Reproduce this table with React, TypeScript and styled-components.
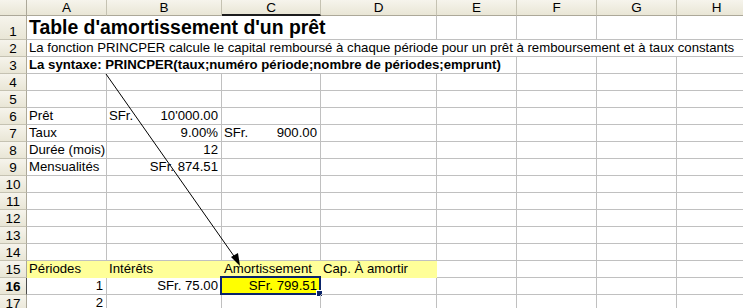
import React from "react";
import styled, { createGlobalStyle, css } from "styled-components";

//////////////////////// TYPES ////////////////////////

interface CellDef {
  text?: string;
  acct?: [string, string];
  align?: "left" | "right";
  bold?: boolean;
  size?: number;
  span?: number;
  fill?: string;
  selected?: boolean;
}

//////////////////////// DATA ////////////////////////

const COLS = ["A", "B", "C", "D", "E", "F", "G", "H"];
const WIDTHS = [80, 115, 99, 116, 80, 80, 80, 80];
const ACTIVE_COL = 2;
const ACTIVE_ROW = 16;
const ROW_COUNT = 17;

const YELLOW = "#ffff99";

const ROWS: Record<number, Record<number, CellDef>> = {
  1: { 0: { text: "Table d'amortissement d'un prêt", bold: true, size: 19.4, span: 4 } },
  2: {
    0: {
      text: "La fonction PRINCPER calcule le capital remboursé à chaque période pour un prêt à remboursement et à taux constants",
      span: 8,
    },
  },
  3: { 0: { text: "La syntaxe: PRINCPER(taux;numéro période;nombre de périodes;emprunt)", bold: true, span: 5 } },
  6: { 0: { text: "Prêt" }, 1: { acct: ["SFr.", "10'000.00"] } },
  7: { 0: { text: "Taux" }, 1: { text: "9.00%", align: "right" }, 2: { acct: ["SFr.", "900.00"] } },
  8: { 0: { text: "Durée (mois)" }, 1: { text: "12", align: "right" } },
  9: { 0: { text: "Mensualités" }, 1: { text: "SFr. 874.51", align: "right" } },
  15: {
    0: { text: "Périodes", fill: YELLOW },
    1: { text: "Intérêts", fill: YELLOW },
    2: { text: "Amortissement", fill: YELLOW },
    3: { text: "Cap. À amortir", fill: YELLOW },
  },
  16: {
    0: { text: "1", align: "right" },
    1: { text: "SFr. 75.00", align: "right" },
    2: { text: "SFr. 799.51", align: "right", fill: "#ffff00", selected: true },
  },
  17: { 0: { text: "2", align: "right" } },
};

//////////////////////// STYLED-COMPONENTS ////////////////////////

const GlobalStyle = createGlobalStyle`
  html, body {
    margin: 0;
    padding: 0;
    background: #ffffff;
    overflow: hidden;
  }
  body {
    font-family: "Liberation Sans", Arial, sans-serif;
    font-size: 13px;
    color: #000000;
  }
`;

const Wrap = styled.div`
  position: relative;
  width: 743px;
  height: 308px;
  overflow: hidden;
`;

const Sheet = styled.div`
  display: grid;
  grid-template-columns: 27px ${WIDTHS.map((w) => `${w}px`).join(" ")};
  grid-template-rows: 16px 24px repeat(${ROW_COUNT - 1}, 17px);
  width: max-content;
`;

const headerBase = css`
  box-sizing: border-box;
  display: flex;
  align-items: center;
  justify-content: center;
  background: linear-gradient(#f6f4ec, #e9e6d6);
  color: #000000;
  font-size: 13.5px;
  line-height: 1;
`;

const Corner = styled.div`
  ${headerBase};
  border-right: 1px solid #aca899;
  border-bottom: 1px solid #aca899;
`;

const ColHead = styled.div<{ $active?: boolean }>`
  ${headerBase};
  border-right: 1px solid #c5c2b2;
  border-bottom: ${(p) => (p.$active ? "2px solid #1c1c1c" : "1px solid #aca899")};
  padding-top: 1px;
`;

const RowHead = styled.div<{ $active?: boolean }>`
  ${headerBase};
  border-right: ${(p) => (p.$active ? "1px solid #4a4a4a" : "1px solid #aca899")};
  border-bottom: 1px solid #c5c2b2;
  font-weight: ${(p) => (p.$active ? 700 : 400)};
  align-items: flex-end;
  padding-bottom: 1px;
`;

const Cell = styled.div<{
  $align?: string;
  $bold?: boolean;
  $size?: number;
  $span?: number;
  $fill?: string;
}>`
  position: relative;
  box-sizing: border-box;
  grid-column: span ${(p) => p.$span ?? 1};
  display: flex;
  align-items: flex-end;
  justify-content: ${(p) => (p.$align === "right" ? "flex-end" : "flex-start")};
  padding: 0 3px 1px 2px;
  white-space: nowrap;
  overflow: visible;
  background: ${(p) => p.$fill ?? "transparent"};
  border-right: 1px solid ${(p) => p.$fill ?? "#c0c0c0"};
  border-bottom: 1px solid ${(p) => p.$fill ?? "#c0c0c0"};
  font-weight: ${(p) => (p.$bold ? 700 : 400)};
  font-size: ${(p) => p.$size ?? 13.2}px;
  line-height: ${(p) => (p.$size ? "22px" : "15px")};
`;

const Accounting = styled.div`
  display: flex;
  justify-content: space-between;
  flex: 1;
`;

const Selection = styled.div`
  position: absolute;
  left: -2px;
  top: -2px;
  right: -1px;
  bottom: -1px;
  border: 2px solid #0a246a;
  pointer-events: none;
`;

const FillHandle = styled.div`
  position: absolute;
  right: -4px;
  bottom: -4px;
  width: 5px;
  height: 5px;
  background: #0a246a;
  border: 1px solid #ffffff;
`;

const Overlay = styled.svg`
  position: absolute;
  left: 0;
  top: 0;
  pointer-events: none;
`;

//////////////////////// COMPONENT ////////////////////////

const renderRow = (r: number) => {
  const defs = ROWS[r] ?? {};
  const out: React.ReactNode[] = [];
  let c = 0;
  while (c < COLS.length) {
    const d = defs[c];
    if (!d) {
      out.push(<Cell key={`${r}-${c}`} />);
      c += 1;
      continue;
    }
    out.push(
      <Cell
        key={`${r}-${c}`}
        $align={d.align}
        $bold={d.bold}
        $size={d.size}
        $span={d.span}
        $fill={d.fill}
      >
        {d.acct ? (
          <Accounting>
            <span>{d.acct[0]}</span>
            <span>{d.acct[1]}</span>
          </Accounting>
        ) : (
          d.text
        )}
        {d.selected && (
          <Selection>
            <FillHandle />
          </Selection>
        )}
      </Cell>
    );
    c += d.span ?? 1;
  }
  return out;
};

const App = () => {
  const rows = Array.from({ length: ROW_COUNT }, (_, i) => i + 1);
  return (
    <Wrap>
      <GlobalStyle />
      <Sheet>
        <Corner />
        {COLS.map((col, i) => (
          <ColHead key={col} $active={i === ACTIVE_COL}>
            {col}
          </ColHead>
        ))}
        {rows.map((r) => (
          <React.Fragment key={r}>
            <RowHead $active={r === ACTIVE_ROW}>{r}</RowHead>
            {renderRow(r)}
          </React.Fragment>
        ))}
      </Sheet>
      <Overlay width={743} height={308}>
        <line x1={106} y1={74} x2={236} y2={259} stroke="#000" strokeWidth={1} />
        <polygon points="240,266 231,257 238,253" fill="#000" />
      </Overlay>
    </Wrap>
  );
};

//////////////////////// EXPORT ////////////////////////

export default App;
